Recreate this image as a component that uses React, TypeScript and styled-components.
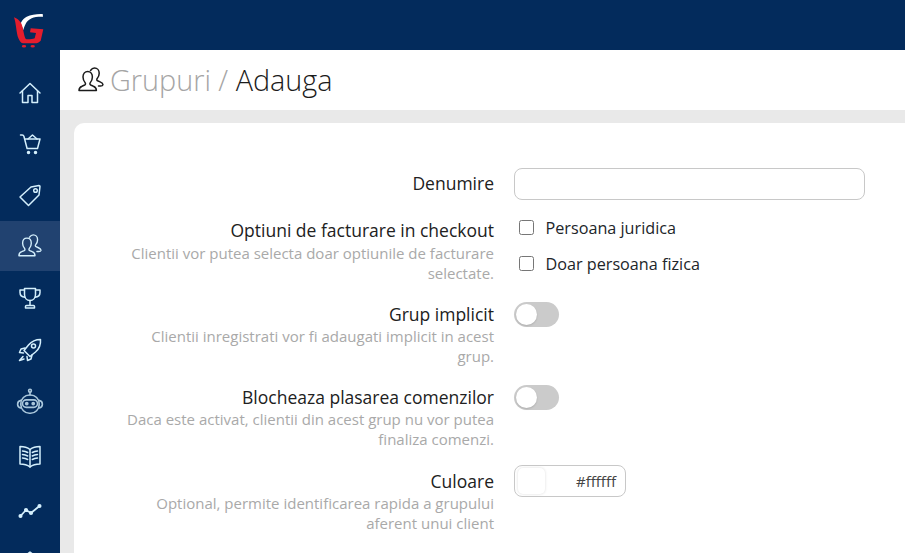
import React from "react";
import styled, { createGlobalStyle } from "styled-components";

const GlobalStyle = createGlobalStyle`
  html, body {
    margin: 0;
    height: 100%;
    overflow: hidden;
    background: #fff;
    font-family: "Open Sans", "Liberation Sans", sans-serif;
  }
  #root { height: 100%; }
`;

const Page = styled.div`
  display: flex;
  height: 553px;
  overflow: hidden;
`;

const Sidebar = styled.nav`
  flex: 0 0 60px;
  background: #032b5c;
  overflow: hidden;
`;

const LogoBox = styled.div`
  height: 68px;
  svg { display: block; }
`;

const NavItem = styled.div<{ $h: number; $active?: boolean }>`
  height: ${({ $h }) => $h}px;
  display: flex;
  align-items: center;
  justify-content: center;
  background: ${({ $active }) => ($active ? "#214270" : "transparent")};
  flex-shrink: 0;
`;

const Main = styled.div`
  flex: 1;
  display: flex;
  flex-direction: column;
  min-width: 0;
`;

const TopBar = styled.div`
  height: 50px;
  background: #032b5c;
`;

const Header = styled.header`
  height: 60px;
  background: #fff;
  display: flex;
  align-items: center;
  gap: 6px;
  padding-left: 18px;
`;

const Title = styled.h1`
  margin: 0;
  font-size: 28.8px;
  font-weight: 300;
  line-height: 60px;
  color: #1b1b1b;
`;

const Crumb = styled.span`
  color: #a5a5a5;
`;

const Content = styled.div`
  flex: 1;
  background: #e9e9e9;
  padding: 13px 0 0 14px;
  overflow: hidden;
`;

const Card = styled.section`
  background: #fff;
  border-radius: 10px 0 0 0;
  padding: 45px 40px 0 50px;
  height: 100%;
  box-sizing: border-box;
  display: flex;
  flex-direction: column;
  gap: 19.2px;
`;

const Row = styled.div`
  display: grid;
  grid-template-columns: 370px 351px;
  column-gap: 20px;
  align-items: start;
`;

const LabelCol = styled.div<{ $pad?: number }>`
  text-align: right;
  padding-top: ${({ $pad }) => $pad ?? 0}px;
`;

const Label = styled.div`
  font-size: 17.5px;
  line-height: 24px;
  color: #212121;
`;

const Help = styled.div`
  font-size: 15px;
  line-height: 20px;
  color: #a9a9a9;
  margin-top: 0.2px;
`;

const TextInput = styled.input`
  display: block;
  width: 100%;
  height: 32px;
  box-sizing: border-box;
  border: 1px solid #c8c8c8;
  border-radius: 8px;
  background: #fff;
  outline: none;
  margin-bottom: -0.8px;
`;

const CheckList = styled.div`
  display: flex;
  flex-direction: column;
  gap: 12px;
  padding-left: 5px;
  margin-top: -2px;
`;

const CheckRow = styled.label`
  display: flex;
  align-items: center;
  gap: 11.5px;
  font-size: 16.2px;
  line-height: 24px;
  color: #212529;
`;

const CheckBox = styled.input`
  width: 15px;
  height: 15px;
  margin: 0 0 2px;
`;

const Toggle = styled.div`
  width: 45px;
  height: 25px;
  border-radius: 13px;
  background: #cbcbcb;
  padding: 2px;
  box-sizing: border-box;
`;

const Knob = styled.div`
  width: 21px;
  height: 21px;
  border-radius: 50%;
  background: #fff;
  box-shadow: 0 1px 2px rgba(0, 0, 0, 0.15);
`;

const ColorBox = styled.div`
  width: 112px;
  height: 32px;
  box-sizing: border-box;
  border: 1px solid #c8c8c8;
  border-radius: 8px;
  display: flex;
  align-items: center;
  justify-content: space-between;
  padding: 2px 9px 2px 3px;
  margin-top: -4px;
  font-size: 15px;
  color: #444;
`;

const Swatch = styled.div`
  width: 27px;
  height: 26px;
  border-radius: 5px;
  background: #fff;
  box-shadow: 0 0 3px rgba(0, 0, 0, 0.14);
`;

const NavIcon = ({ children, size = 26, opacity = 1 }: { children: React.ReactNode; size?: number; opacity?: number }) => (
  <svg
    width={size}
    height={size}
    viewBox="0 0 26 26"
    fill="none"
    stroke="#d4effc"
    strokeWidth="1.5"
    strokeLinecap="round"
    strokeLinejoin="round"
    opacity={opacity}
  >
    {children}
  </svg>
);

const UsersPaths = () => (
  <>
    <path d="M1 23.500c0-2.500 1-3.500 3-4.300l2.700-1.200c1-.5 1-1.500.4-2.400C5.800 14 5 12 5 10c0-3.300 2-5.500 4.700-5.500s4.700 2.200 4.700 5.500c0 2-.8 4-2.100 5.600-.6.9-.6 1.900.4 2.400l2.700 1.200c2 .8 3 1.800 3 4.300z" />
    <path d="M12.500 3.500C13.500 2 15 1 16.500 1c2.700 0 4.700 2.200 4.700 5.200 0 2-.7 3.800-2 5.300-.6.9-.5 1.800.4 2.300l2.500 1.100c2.200 1 3 1.800 2.800 2.900-.2.900-1.200 1.300-2.900 1.200h-1.500" />
  </>
);

const navItems: { h: number; active?: boolean; icon: React.ReactNode }[] = [
  {
    h: 50,
    icon: (
      <NavIcon>
        <path d="M3 13 13 3.500 23 13" />
        <path d="M5.500 11v11.500h5.500v-7h4v7h5.500V11" />
      </NavIcon>
    ),
  },
  {
    h: 51,
    icon: (
      <NavIcon>
        <path d="M3.500 4h1.800c.8 0 1.300.4 1.600 1.200l3.200 12.300h10.400l2.500-9.500H8" />
        <path d="M11 8 15.500 4 20 8" />
        <circle cx="11.500" cy="21.500" r="1" fill="#d4effc" />
        <circle cx="18.500" cy="21.500" r="1" fill="#d4effc" />
      </NavIcon>
    ),
  },
  {
    h: 52,
    icon: (
      <NavIcon>
        <path d="M3 15 14 5l8-1.500c.6 0 1 .4 1 1l-1 8.500L11.500 23.500z" />
        <circle cx="18.500" cy="8.500" r="1.800" />
      </NavIcon>
    ),
  },
  {
    h: 50,
    active: true,
    icon: (
      <NavIcon size={24}>
        <UsersPaths />
      </NavIcon>
    ),
  },
  {
    h: 54,
    icon: (
      <NavIcon>
        <path d="M7.500 3.500h11v6c0 3.600-2.300 6-5.500 6s-5.500-2.400-5.500-6z" />
        <path d="M7.500 5H3v2.500c0 2.500 2 4.500 5 4.700M18.500 5H23v2.500c0 2.500-2 4.500-5 4.700" />
        <path d="M13 15.500v5M8.500 23h9v-1.500c0-.6-.4-1-1-1h-7c-.6 0-1 .4-1 1z" />
      </NavIcon>
    ),
  },
  {
    h: 50,
    icon: (
      <NavIcon>
        <path d="M23.500 2.500c.4 5-1.500 9.500-5 12.500l-5.500 4.500-6-6 4.500-5.500c3-3.500 7-5.500 12-5.500z" />
        <circle cx="16.500" cy="9" r="2" />
        <path d="M8 11 4 12 2.500 15.500l4 .5M15 18l-1 4-3.500 1.500-.5-4" />
        <path d="M6 19.500 2.500 23.500 7 22" />
      </NavIcon>
    ),
  },
  {
    h: 54,
    icon: (
      <NavIcon size={28} opacity={0.8}>
        <circle cx="13" cy="2.500" r="1.300" />
        <path d="M13 4v2.500" />
        <rect x="4.500" y="6.500" width="17" height="17" rx="8" />
        <rect x="6" y="11" width="14" height="7" rx="3.500" />
        <circle cx="10" cy="14.500" r="1" fill="#d4effc" />
        <circle cx="16" cy="14.500" r="1" fill="#d4effc" />
        <path d="M4.500 11.500C2.500 12 1.500 13.500 1.500 15s1 3 3 3.500M21.500 11.500c2 .5 3 2 3 3.500s-1 3-3 3.500" />
      </NavIcon>
    ),
  },
  {
    h: 54,
    icon: (
      <NavIcon>
        <path d="M13 6.500C10.500 4.500 7 3.500 3 3.500v17.500c4 0 7.500 1 10 3 2.500-2 6-3 10-3V3.500c-4 0-7.500 1-10 3z" />
        <path d="M13 6.500V24" />
        <path d="M5.500 8c2 .2 3.700.7 5.200 1.500M5.500 11.500c2 .2 3.700.7 5.200 1.500M5.500 15c2 .2 3.700.7 5.200 1.500M20.500 8c-2 .2-3.700.7-5.200 1.500M20.500 11.500c-2 .2-3.700.7-5.200 1.500M20.500 15c-2 .2-3.700.7-5.200 1.500" />
      </NavIcon>
    ),
  },
  {
    h: 54,
    icon: (
      <NavIcon>
        <path d="M3.500 19 9 13l5 3 8.500-7" strokeWidth="1.800" />
        <circle cx="3.500" cy="19" r="1.300" fill="#d4effc" />
        <circle cx="9" cy="13" r="1.300" fill="#d4effc" />
        <circle cx="14" cy="16" r="1.300" fill="#d4effc" />
        <circle cx="22.500" cy="9" r="1.300" fill="#d4effc" />
      </NavIcon>
    ),
  },
  {
    h: 50,
    icon: (
      <NavIcon>
        <path d="M13 3c3 2 5 5 5 9v6H8v-6c0-4 2-7 5-9z" />
      </NavIcon>
    ),
  },
];

const Logo = () => (
  <svg width="60" height="68" viewBox="0 0 60 68">
    <path
      d="M20.700 23.300C22.500 19.500 24.500 17.800 26.700 16.700 31 14.700 37 13.700 42.700 14l.3 2.800c-4-.2-8.500.2-11.300 1.500C28.500 19.800 26.800 21.500 26 23.300c-1.200 2.300-2.200 4.800-2.700 6.700z"
      fill="#fff"
    />
    <path
      d="M14 17.300C17 18.300 19.500 20.300 21.200 23.300 22.500 26 23.200 30 24 34c.6 3 1.400 5.300 2.700 5.300 2.500.2 5.500 0 8-1l1.300-5.300-6-.7.700-4 12.600 1-2.600 11.400c-1.500 1.600-3.500 2.600-6 2.600H23.300c-2.300 0-3.800-2.300-5-5.300C16.300 33 16.300 24 14 17.300z"
      fill="#e41d2d"
    />
    <ellipse cx="24" cy="46.200" rx="2.200" ry="1.300" fill="#e41d2d" />
    <ellipse cx="32.700" cy="46.200" rx="2.200" ry="1.300" fill="#e41d2d" />
  </svg>
);

const rows = [
  {
    label: "Grup implicit",
    help: "Clientii inregistrati vor fi adaugati implicit in acest grup.",
  },
  {
    label: "Blocheaza plasarea comenzilor",
    help: "Daca este activat, clientii din acest grup nu vor putea finaliza comenzi.",
  },
];

export default function App() {
  return (
    <Page>
      <GlobalStyle />
      <Sidebar>
        <LogoBox>
          <Logo />
        </LogoBox>
        {navItems.map((item, i) => (
          <NavItem key={i} $h={item.h} $active={item.active}>
            {item.icon}
          </NavItem>
        ))}
      </Sidebar>
      <Main>
        <TopBar />
        <Header>
          <svg width="26" height="26" viewBox="0 0 26 26" fill="none" stroke="#1b1b1b" strokeWidth="1.500" strokeLinejoin="round" strokeLinecap="round">
            <UsersPaths />
          </svg>
          <Title>
            <Crumb>Grupuri / </Crumb>Adauga
          </Title>
        </Header>
        <Content>
          <Card>
            <Row>
              <LabelCol $pad={3}>
                <Label>Denumire</Label>
              </LabelCol>
              <TextInput type="text" />
            </Row>
            <Row>
              <LabelCol>
                <Label>Optiuni de facturare in checkout</Label>
                <Help>Clientii vor putea selecta doar optiunile de facturare selectate.</Help>
              </LabelCol>
              <CheckList>
                <CheckRow>
                  <CheckBox type="checkbox" />
                  Persoana juridica
                </CheckRow>
                <CheckRow>
                  <CheckBox type="checkbox" />
                  Doar persoana fizica
                </CheckRow>
              </CheckList>
            </Row>
            {rows.map((r) => (
              <Row key={r.label}>
                <LabelCol>
                  <Label>{r.label}</Label>
                  <Help>{r.help}</Help>
                </LabelCol>
                <Toggle>
                  <Knob />
                </Toggle>
              </Row>
            ))}
            <Row>
              <LabelCol>
                <Label>Culoare</Label>
                <Help>Optional, permite identificarea rapida a grupului aferent unui client</Help>
              </LabelCol>
              <ColorBox>
                <Swatch />
                #ffffff
              </ColorBox>
            </Row>
          </Card>
        </Content>
      </Main>
    </Page>
  );
}
